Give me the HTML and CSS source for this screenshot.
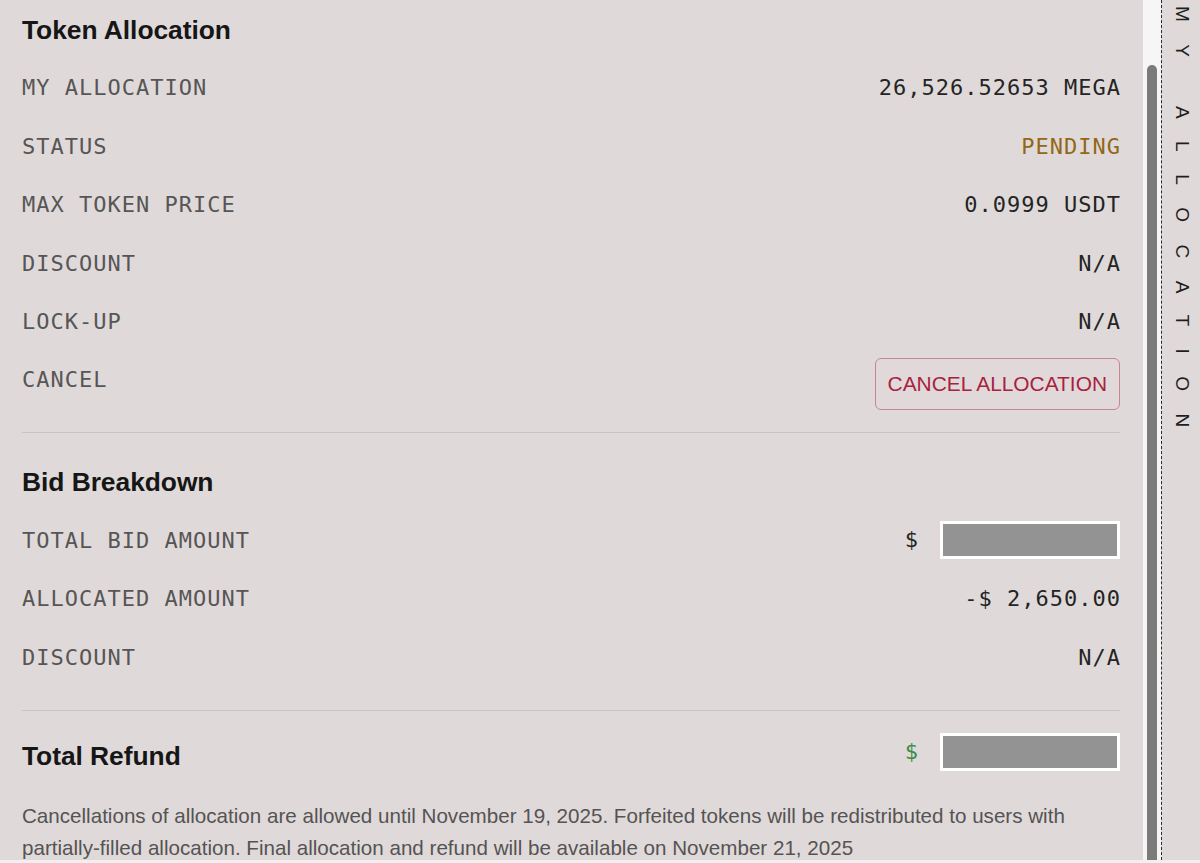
FILE: index.html
```html
<!DOCTYPE html>
<html lang="en">
<head>
<meta charset="utf-8">
<title>My Allocation</title>
<link rel="stylesheet" href="styles.css">
</head>
<body>
<div class="app">
  <main class="main">
    <section class="section first">
      <h2 class="heading">Token Allocation</h2>
      <div class="row"><span class="label">MY ALLOCATION</span><span class="value">26,526.52653 MEGA</span></div>
      <div class="row"><span class="label">STATUS</span><span class="value pending">PENDING</span></div>
      <div class="row"><span class="label">MAX TOKEN PRICE</span><span class="value">0.0999 USDT</span></div>
      <div class="row"><span class="label">DISCOUNT</span><span class="value">N/A</span></div>
      <div class="row"><span class="label">LOCK-UP</span><span class="value">N/A</span></div>
      <div class="row row-cancel"><span class="label">CANCEL</span><button class="cancel-btn">CANCEL ALLOCATION</button></div>
    </section>
    <section class="section second">
      <h2 class="heading">Bid Breakdown</h2>
      <div class="row"><span class="label">TOTAL BID AMOUNT</span><span class="value money"><span class="cur">$</span><span class="redact"></span></span></div>
      <div class="row"><span class="label">ALLOCATED AMOUNT</span><span class="value">-$ 2,650.00</span></div>
      <div class="row"><span class="label">DISCOUNT</span><span class="value">N/A</span></div>
    </section>
    <section class="section third">
      <div class="refund-row">
        <h2 class="heading">Total Refund</h2>
        <span class="value money"><span class="cur green">$</span><span class="redact"></span></span>
      </div>
      <p class="note">Cancellations of allocation are allowed until November 19, 2025. Forfeited tokens will be redistributed to users with partially-filled allocation. Final allocation and refund will be available on November 21, 2025</p>
    </section>
  </main>
  <div class="scrolltrack"><div class="thumb"></div></div>
  <aside class="side"><span class="side-text">MY ALLOCATION</span></aside>
</div>
</body>
</html>
```
FILE: styles.css
```css
* { box-sizing: border-box; }
html, body { margin: 0; padding: 0; }
body {
  background: #f1efef;
  width: 1200px;
  height: 863px;
  overflow: hidden;
  font-family: "Liberation Sans", Arial, sans-serif;
}
.app {
  display: flex;
  height: 860px;
  background: #dfdad9;
  overflow: hidden;
}
.main {
  width: 1143px;
  padding: 0 23px 0 22px;
  overflow: hidden;
}
.section { border-bottom: 1px solid #c9c4c3; }
.section.first { padding-bottom: 22px; }
.section.second { padding-top: 19px; padding-bottom: 24px; }
.section.third { border-bottom: none; padding-top: 21px; }
.heading {
  margin: 0;
  font-size: 26.4px;
  font-weight: bold;
  color: #161616;
  height: 58.4px;
  line-height: 60px;
  letter-spacing: -0.05px;
}
.row {
  display: flex;
  justify-content: space-between;
  align-items: flex-start;
  height: 58.4px;
}
.row-cancel { height: 60px; }
.label, .value {
  font-family: "DejaVu Sans Mono", "Liberation Mono", monospace;
  font-size: 22px;
  letter-spacing: 1px;
  line-height: 60px;
  white-space: pre;
}
.label { color: #575555; }
.value { color: #242424; margin-right: -1px; }
.pending { color: #936618; }
.cancel-btn {
  margin-top: 8px;
  height: 52px;
  padding: 0 12px;
  border: 1px solid #c58593;
  border-radius: 6px;
  background: #e1d9d9;
  color: #a8213f;
  font-family: "Liberation Sans", Arial, sans-serif;
  font-size: 20.9px;
  letter-spacing: 0;
  cursor: pointer;
}
.money {
  display: flex;
  align-items: center;
  height: 58.4px;
  margin-right: 0;
}
.cur { margin-right: 21px; }
.green { color: #3c8a4a; }
.redact {
  display: block;
  width: 180px;
  height: 38px;
  background: #939393;
  border: 3px solid #ffffff;
}
.refund-row {
  display: flex;
  justify-content: space-between;
  align-items: flex-end;
  height: 40px;
}
.refund-row .heading { height: 32px; line-height: 32px; }
.refund-row .money { height: 40px; }
.note {
  margin: 28px 0 0;
  font-size: 20.6px;
  line-height: 32px;
  color: #555353;
}
.scrolltrack {
  width: 18px;
  background: #f7f6f6;
  padding: 65px 4px 0 4px;
  display: flex;
}
.thumb {
  width: 9px;
  flex: 1;
  background: #7b7b7b;
  border-radius: 5px 5px 0 0;
}
.side {
  width: 39px;
  border-left: 1px dashed #2b2b2b;
  padding-top: 6px;
  display: flex;
  justify-content: center;
}
.side-text {
  writing-mode: vertical-rl;
  font-size: 19px;
  letter-spacing: 22.5px;
  color: #1e1e1e;
  font-weight: normal;
  line-height: 20px;
  margin-left: 2px;
}
```
